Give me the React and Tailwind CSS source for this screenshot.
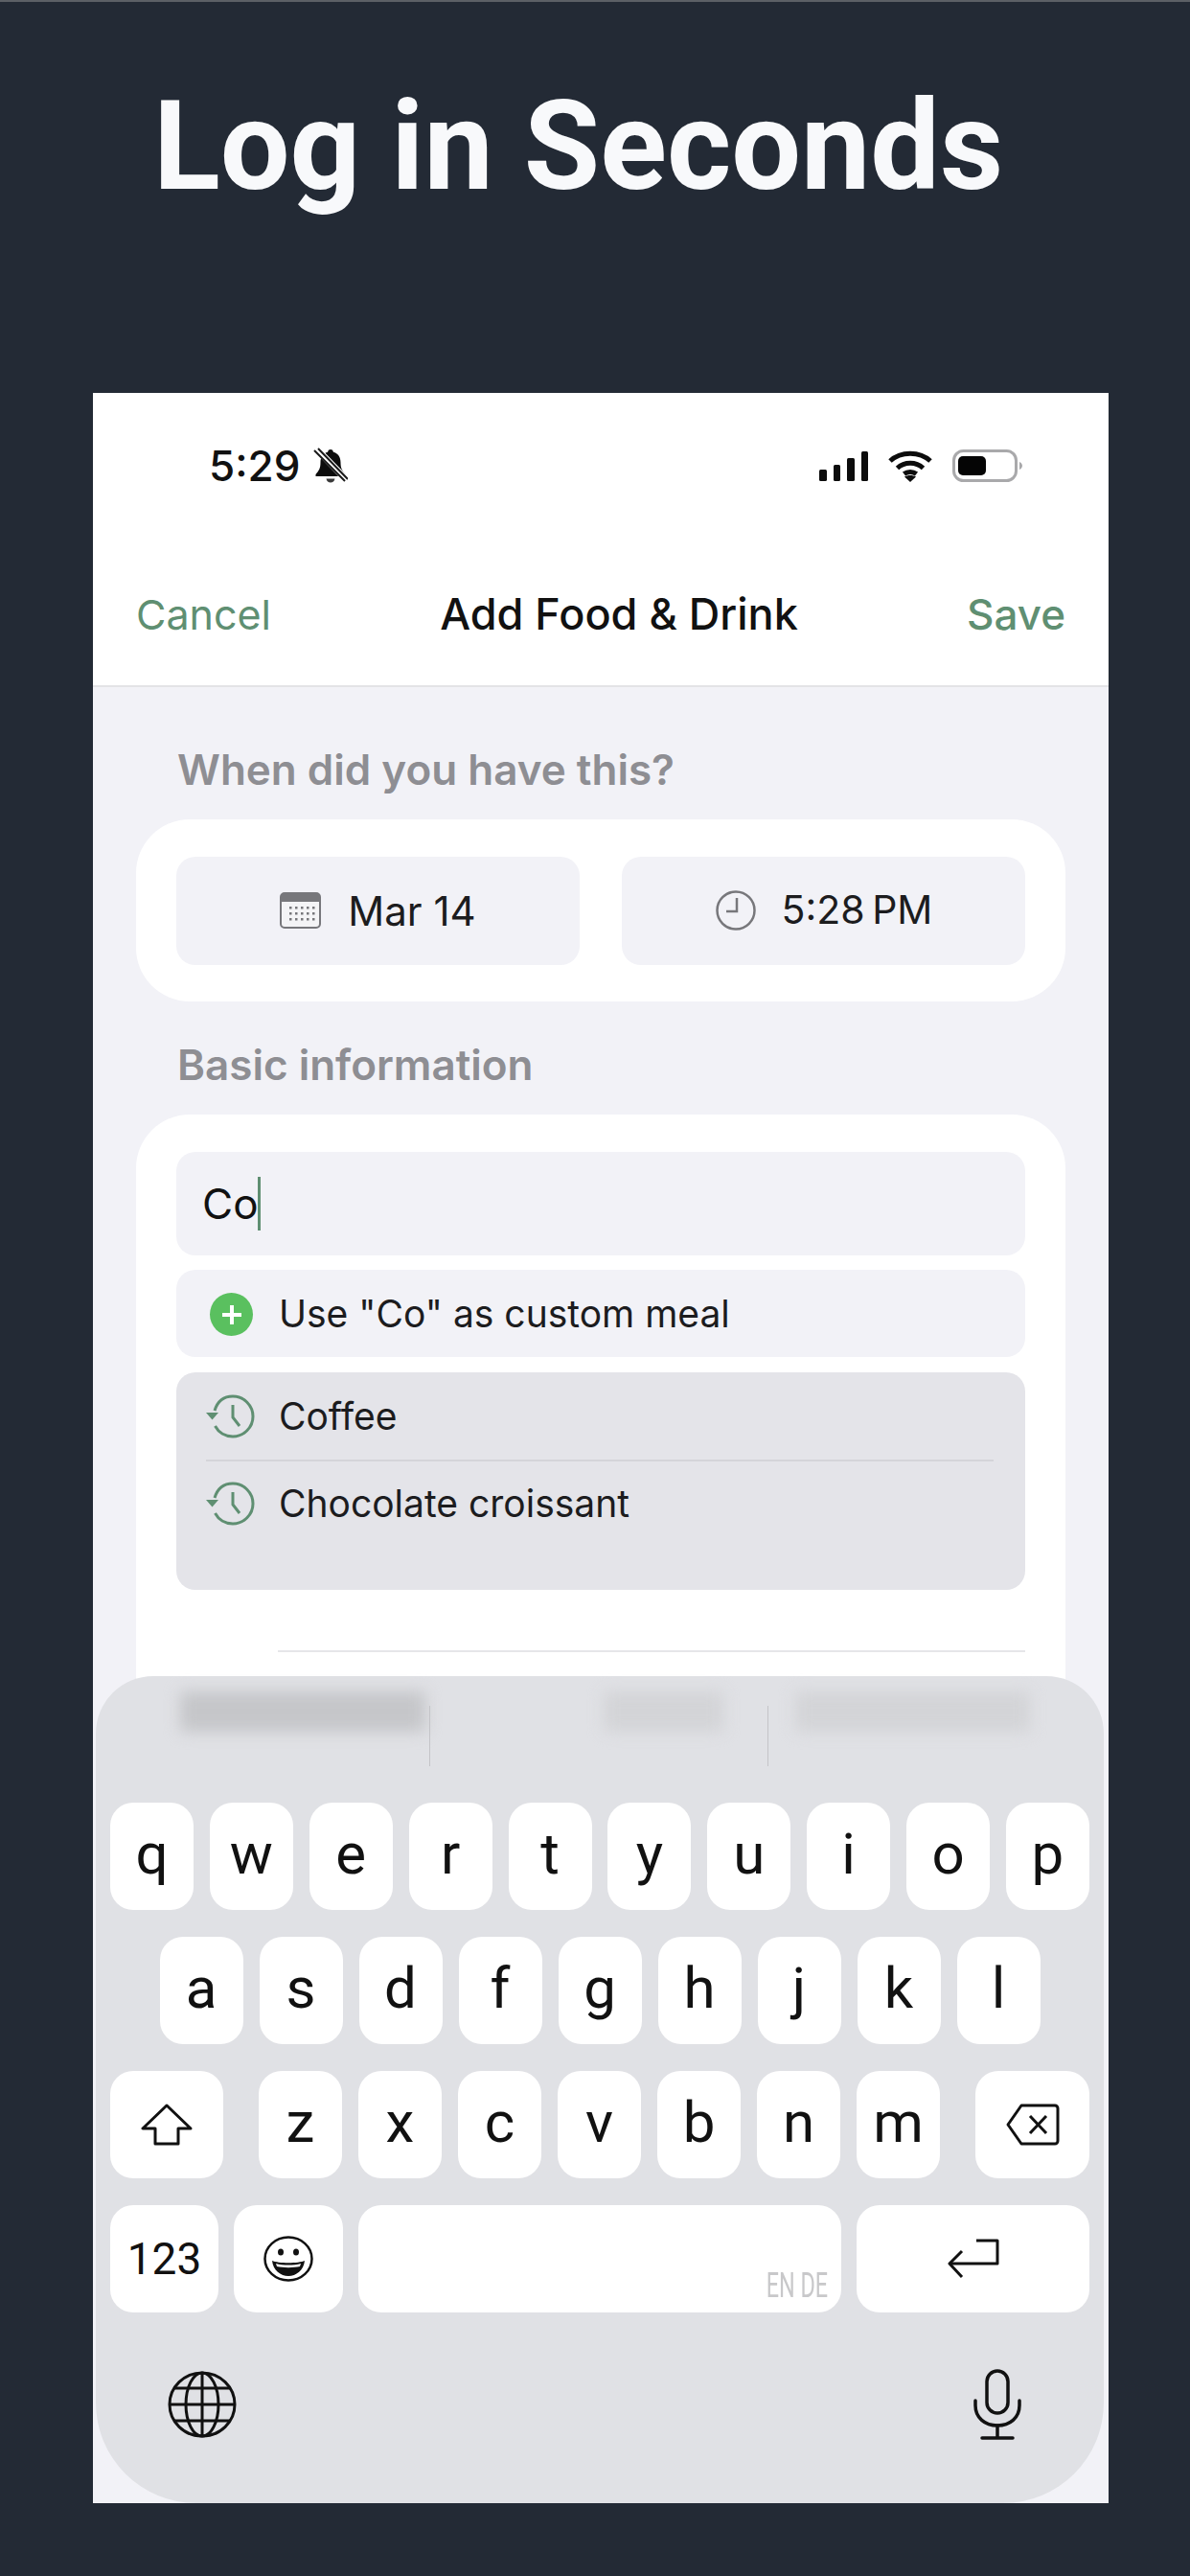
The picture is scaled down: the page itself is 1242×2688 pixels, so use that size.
const rowOne = ["q", "w", "e", "r", "t", "y", "u", "i", "o", "p"];
const rowTwo = ["a", "s", "d", "f", "g", "h", "j", "k", "l"];
const rowThree = ["z", "x", "c", "v", "b", "n", "m"];

function BellOff() {
  return (
    <svg width="36" height="38" viewBox="0 0 36 38">
      <path d="M18 2c1.700 0 2.800 1.200 2.900 2.800 5 1.300 7.600 5.400 7.600 10.700 0 6 1.500 8.500 5 12.500v2H2.500v-2c3.500-4 5-6.500 5-12.500 0-5.300 2.600-9.400 7.600-10.700.1-1.600 1.200-2.800 2.900-2.800z" fill="#0c0c0c" />
      <path d="M13.500 32.500h9c-.4 2.500-2.200 4-4.500 4s-4.100-1.500-4.500-4z" fill="#3a3a3a" />
      <path d="M3 1l32 33" stroke="#fff" strokeWidth="7" />
      <path d="M1 3l32 32M5 1l31 32" stroke="#1a1a1a" strokeWidth="2" />
    </svg>
  );
}

function StatusIcons() {
  return (
    <div className="flex items-center">
      <svg width="52" height="32" viewBox="0 0 52 32" fill="#0c0c0c">
        <rect x="0" y="20" width="8" height="12" rx="1.500" />
        <rect x="15" y="15" width="7" height="17" rx="1.500" />
        <rect x="29" y="8" width="8" height="24" rx="1.500" />
        <rect x="44" y="1" width="7" height="31" rx="1.500" />
      </svg>
      <svg className="ml-[20px]" width="46" height="33" viewBox="0 0 46 33" fill="none" stroke="#0c0c0c" strokeWidth="5">
        <path d="M2 11c11-10.500 31-10.500 42 0" />
        <path d="M9.500 18.500c7.500-7 19.500-7 27 0" />
        <path d="M16.500 24.500c3.500-2.800 9.500-2.800 13 0" />
        <path d="M23 33l-6-5.500c3.500-2 8.500-2 12 0z" fill="#0c0c0c" stroke="none" />
      </svg>
      <svg className="ml-[21px]" width="73" height="34" viewBox="0 0 73 34">
        <rect x="1.500" y="1.500" width="65" height="31" rx="10" fill="#fff" stroke="#a9a9ab" strokeWidth="3" />
        <rect x="6" y="7" width="29" height="20" rx="5" fill="#050505" />
        <path d="M70 13c2 1 3 2.500 3 4s-1 3-3 4z" fill="#a9a9ab" />
      </svg>
    </div>
  );
}

function CalendarIcon() {
  return (
    <svg width="43" height="38" viewBox="0 0 43 38">
      <rect x="1" y="1" width="41" height="36" rx="4" fill="#f4f4f6" stroke="#77777b" strokeWidth="2" />
      <path d="M1 5a4 4 0 0 1 4-4h33a4 4 0 0 1 4 4v5H1z" fill="#77777b" />
      <g fill="#77777b">
        {[15, 21, 27].map((y) =>
          [10, 16, 22, 28, 34].map((x) => <rect key={`${x}-${y}`} x={x} y={y} width="2.500" height="2.500" />)
        )}
      </g>
    </svg>
  );
}

function ClockIcon() {
  return (
    <svg width="44" height="42" viewBox="0 0 44 42" fill="none" stroke="#77777b" strokeWidth="2.500">
      <circle cx="22" cy="21" r="19.500" />
      <path d="M23 8v14H12" />
    </svg>
  );
}

function HistoryIcon() {
  return (
    <svg width="52" height="46" viewBox="0 0 52 46" fill="none" stroke="#5f8f72" strokeWidth="3">
      <path d="M9 17C12 7 19 2 28 2c11.500 0 21 9.500 21 21s-9.500 21-21 21c-8 0-15-4.500-18.500-11" />
      <path d="M28 11v13l7 9" />
      <path d="M0 19h13l-6.500 7.500z" fill="#5f8f72" stroke="none" />
    </svg>
  );
}

function ShiftIcon() {
  return (
    <svg width="54" height="44" viewBox="0 0 54 44" fill="none" stroke="#111" strokeWidth="3" strokeLinejoin="round">
      <path d="M27 2L2 26h13v16h24V26h13z" />
    </svg>
  );
}

function DeleteIcon() {
  return (
    <svg width="56" height="44" viewBox="0 0 56 44" fill="none" stroke="#111" strokeWidth="3" strokeLinejoin="round">
      <path d="M16 2h35a3 3 0 0 1 3 3v34a3 3 0 0 1-3 3H16L2 22z" />
      <path d="M25 13l17 18M42 13L25 31" />
    </svg>
  );
}

function SmileIcon() {
  return (
    <svg width="52" height="48" viewBox="0 0 52 48" fill="none" stroke="#111" strokeWidth="2.500">
      <ellipse cx="26" cy="24" rx="24.500" ry="22.500" />
      <ellipse cx="18" cy="17" rx="3" ry="3.500" fill="#111" stroke="none" />
      <ellipse cx="34" cy="17" rx="3" ry="3.500" fill="#111" stroke="none" />
      <path d="M9 26c6 3 28 3 34 0-1 10-9 16-17 16S10 36 9 26z" fill="#111" stroke="none" />
      <path d="M13 29c7 2 19 2 26 0l-1 3c-7 1.500-17 1.500-24 0z" fill="#fff" stroke="none" />
    </svg>
  );
}

function ReturnIcon() {
  return (
    <svg width="54" height="42" viewBox="0 0 54 42" fill="none" stroke="#111" strokeWidth="3" strokeLinejoin="round">
      <path d="M30 2h22v24H3" />
      <path d="M15 13L2 26l13 14" />
    </svg>
  );
}

function GlobeIcon() {
  return (
    <svg width="72" height="70" viewBox="0 0 72 70" fill="none" stroke="#111" strokeWidth="3">
      <ellipse cx="36" cy="35" rx="34" ry="33" />
      <ellipse cx="36" cy="35" rx="17" ry="33" />
      <path d="M36 2v66M2 35h68M7 18h58M7 52h58" />
    </svg>
  );
}

function MicIcon() {
  return (
    <svg width="50" height="74" viewBox="0 0 50 74" fill="none" stroke="#111" strokeWidth="3.500" strokeLinecap="round">
      <rect x="14" y="2" width="22" height="44" rx="11" />
      <path d="M2 33v5c0 13 10 21 23 21s23-8 23-21v-5" />
      <path d="M25 59v13M9 72h32" />
    </svg>
  );
}

function Key({ children, className = "w-[87px] pb-[5px]" }) {
  return (
    <div className={`relative flex h-[112px] items-center justify-center rounded-[24px] bg-white text-[60px] font-normal text-[#111] font-['Roboto',sans-serif] ${className}`}>
      {children}
    </div>
  );
}

function Keyboard() {
  return (
    <div className="absolute right-[5px] bottom-0 left-[3px] h-[863px] rounded-t-[60px] rounded-b-[105px] bg-[#e0e1e5]">
      <div className="relative h-[132px]">
        <div className="absolute top-[16px] left-[88px] h-[42px] w-[256px] rounded bg-[#c5c6c9] blur-[8px]" />
        <div className="absolute top-[16px] left-[530px] h-[42px] w-[125px] rounded bg-[#d3d4d7] blur-[8px]" />
        <div className="absolute top-[16px] left-[730px] h-[42px] w-[245px] rounded bg-[#d3d4d7] blur-[8px]" />
        <div className="absolute top-[31px] left-[348px] h-[63px] w-px bg-[#c4c4c8]" />
        <div className="absolute top-[31px] left-[701px] h-[63px] w-px bg-[#c4c4c8]" />
      </div>
      <div className="flex flex-col gap-[28px] px-[15px]">
        <div className="flex justify-between">
          {rowOne.map((k) => <Key key={k}>{k}</Key>)}
        </div>
        <div className="flex justify-center gap-[17px]">
          {rowTwo.map((k) => <Key key={k}>{k}</Key>)}
        </div>
        <div className="flex items-center justify-between">
          <Key className="w-[118px]"><ShiftIcon /></Key>
          <div className="flex gap-[17px]">
            {rowThree.map((k) => <Key key={k}>{k}</Key>)}
          </div>
          <Key className="w-[119px]"><DeleteIcon /></Key>
        </div>
        <div className="flex gap-[16px]">
          <Key className="w-[113px] !text-[46px]">123</Key>
          <Key className="w-[114px]"><SmileIcon /></Key>
          <Key className="w-[504px]">
            <span className="absolute right-[14px] bottom-[10px] origin-right scale-x-[0.65] text-[36px] leading-[36px] text-[#c8c8ca]">EN DE</span>
          </Key>
          <Key className="flex-1"><ReturnIcon /></Key>
        </div>
      </div>
      <div className="mt-[59px] flex items-center justify-between pr-[86px] pl-[75px]">
        <GlobeIcon />
        <MicIcon />
      </div>
    </div>
  );
}

function SectionLabel({ children, className = "" }) {
  return <div className={`pl-[88px] text-[44px] leading-[48px] font-semibold text-[#8e8e93] ${className}`}>{children}</div>;
}

function SuggestionRow({ children }) {
  return (
    <div className="flex h-[46px] items-center gap-[24px] pl-[31px] text-[39px] text-[#1c1c1e]">
      <HistoryIcon />
      <span>{children}</span>
    </div>
  );
}

export default function App() {
  return (
    <div className="h-[2688px] w-[1242px] overflow-hidden border-t-[2px] border-[#5c6066] bg-[#232a35] font-['Inter',sans-serif]">
      <h1 className="pt-[76px] pl-[160px] text-[129px] leading-[150px] font-bold text-[#f8f9fb] font-['Roboto',sans-serif]">
        Log in Seconds
      </h1>
      <div className="relative mt-[182px] ml-[97px] flex h-[2202px] w-[1060px] flex-col overflow-hidden bg-[#f2f2f7]">
        <div className="h-[307px] border-b-[2px] border-[#e3e3e6] bg-white">
          <div className="flex h-[152px] items-center justify-between pr-[90px] pl-[121px]">
            <div className="flex items-center gap-[14px] text-[44px] leading-none font-medium text-[#111]">
              5:29 <BellOff />
            </div>
            <StatusIcons />
          </div>
          <div className="flex items-center justify-between px-[45px] pt-[54px] text-[45px] leading-[50px] font-medium">
            <span className="text-[43px] font-normal text-[#5f8f72]">Cancel</span>
            <span className="text-[#111]">Add Food &amp; Drink</span>
            <span className="text-[44px] text-[#5f8f72]">Save</span>
          </div>
        </div>

        <SectionLabel className="mt-[62px]">When did you have this?</SectionLabel>
        <div className="mx-[45px] mt-[28px] flex h-[190px] items-center gap-[44px] rounded-[56px] bg-white px-[42px]">
          <div className="flex h-[113px] flex-1 items-center justify-center gap-[28px] rounded-[20px] bg-[#f2f2f7] text-[42px] text-[#1c1c1e]">
            <CalendarIcon />
            <span>Mar 14</span>
          </div>
          <div className="flex h-[113px] flex-1 items-center justify-center gap-[26px] rounded-[20px] bg-[#f2f2f7] text-[41px] text-[#1c1c1e]">
            <ClockIcon />
            <span>5:28{"\u2009"}PM</span>
          </div>
        </div>

        <SectionLabel className="mt-[42px]">Basic information</SectionLabel>
        <div className="mx-[45px] mt-[28px] h-[1100px] rounded-[56px] bg-white px-[42px] pt-[39px]">
          <div className="flex h-[108px] items-center rounded-[20px] bg-[#f2f2f7] pl-[27px] text-[44px] text-[#111]">
            <span>Co</span>
            <span className="-ml-[1px] h-[56px] w-[3px] bg-[#5f8f72]" />
          </div>
          <div className="mt-[15px] flex h-[91px] items-center gap-[27px] rounded-[20px] bg-[#f2f2f7] pt-[2px] pl-[35px] text-[39px] text-[#1c1c1e]">
            <span className="flex h-[45px] w-[45px] items-center justify-center rounded-full bg-[#5ac05f]">
              <svg width="24" height="24" viewBox="0 0 24 24" stroke="#fff" strokeWidth="4"><path d="M12 2v20M2 12h20" /></svg>
            </span>
            <span>Use "Co" as custom meal</span>
          </div>
          <div className="mt-[16px] h-[227px] rounded-[20px] bg-[#e4e4e9] pt-[23px]">
            <SuggestionRow>Coffee</SuggestionRow>
            <div className="mt-[22px] mr-[33px] ml-[31px] h-[2px] bg-[#d4d4d9]" />
            <div className="mt-[21px]">
              <SuggestionRow>Chocolate croissant</SuggestionRow>
            </div>
          </div>
          <div className="mt-[63px] ml-[106px] h-[2px] bg-[#e6e6e9]" />
        </div>

        <Keyboard />
      </div>
    </div>
  );
}
